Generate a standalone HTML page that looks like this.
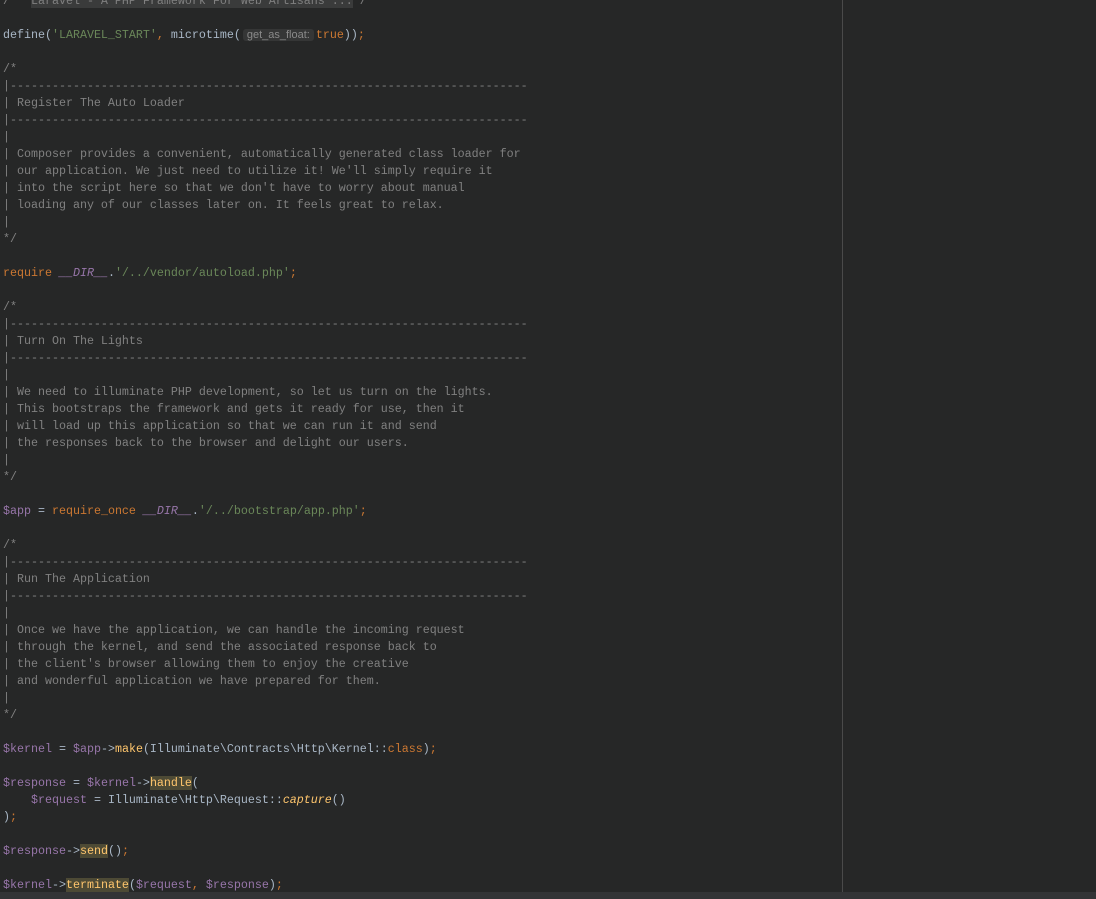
<!DOCTYPE html>
<html><head><meta charset="utf-8"><style>
html,body{margin:0;padding:0;}
body{width:1096px;height:899px;background:#262727;overflow:hidden;position:relative;}
#code{position:absolute;left:3px;top:-7px;font-family:"Liberation Mono",monospace;font-size:11.67px;line-height:17px;color:#a9b7c6;white-space:pre;}
.c{color:#808080}.s{color:#6a8759}.k{color:#cc7832}.v{color:#9876aa}.f{color:#ffc66d}.i{font-style:italic}
.h{background:#4d4a35}
.fold{background:#3a3b3b;color:#808080}
.hint{font-family:"Liberation Sans",sans-serif;font-size:11px;color:#8a8a8a;background:#353636;border-radius:3px;padding:0 4px;margin:0 2px;}
#vl{position:absolute;left:842px;top:0;width:1px;height:892px;background:#4a4a4a}
#bb{position:absolute;left:0;top:892px;width:1096px;height:7px;background:#333436}
</style></head><body>
<div id="code"><span class="c">/** <span class="fold">Laravel - A PHP Framework For Web Artisans ...</span>*/</span>

define(<span class="s">'LARAVEL_START'</span><span class="k">,</span> microtime(<span class="hint">get_as_float:</span><span class="k">true</span>))<span class="k">;</span>

<span class="c">/*
|--------------------------------------------------------------------------
| Register The Auto Loader
|--------------------------------------------------------------------------
|
| Composer provides a convenient, automatically generated class loader for
| our application. We just need to utilize it! We'll simply require it
| into the script here so that we don't have to worry about manual
| loading any of our classes later on. It feels great to relax.
|
*/</span>

<span class="k">require</span> <span class="v i">__DIR__</span>.<span class="s">'/../vendor/autoload.php'</span><span class="k">;</span>

<span class="c">/*
|--------------------------------------------------------------------------
| Turn On The Lights
|--------------------------------------------------------------------------
|
| We need to illuminate PHP development, so let us turn on the lights.
| This bootstraps the framework and gets it ready for use, then it
| will load up this application so that we can run it and send
| the responses back to the browser and delight our users.
|
*/</span>

<span class="v">$app</span> = <span class="k">require_once</span> <span class="v i">__DIR__</span>.<span class="s">'/../bootstrap/app.php'</span><span class="k">;</span>

<span class="c">/*
|--------------------------------------------------------------------------
| Run The Application
|--------------------------------------------------------------------------
|
| Once we have the application, we can handle the incoming request
| through the kernel, and send the associated response back to
| the client's browser allowing them to enjoy the creative
| and wonderful application we have prepared for them.
|
*/</span>

<span class="v">$kernel</span> = <span class="v">$app</span>-&gt;<span class="f">make</span>(Illuminate\Contracts\Http\Kernel::<span class="k">class</span>)<span class="k">;</span>

<span class="v">$response</span> = <span class="v">$kernel</span>-&gt;<span class="f h">handle</span>(
    <span class="v">$request</span> = Illuminate\Http\Request::<span class="f i">capture</span>()
)<span class="k">;</span>

<span class="v">$response</span>-&gt;<span class="f h">send</span>()<span class="k">;</span>

<span class="v">$kernel</span>-&gt;<span class="f h">terminate</span>(<span class="v">$request</span><span class="k">,</span> <span class="v">$response</span>)<span class="k">;</span>
</div>
<div id="vl"></div>
<div id="bb"></div>
</body></html>
